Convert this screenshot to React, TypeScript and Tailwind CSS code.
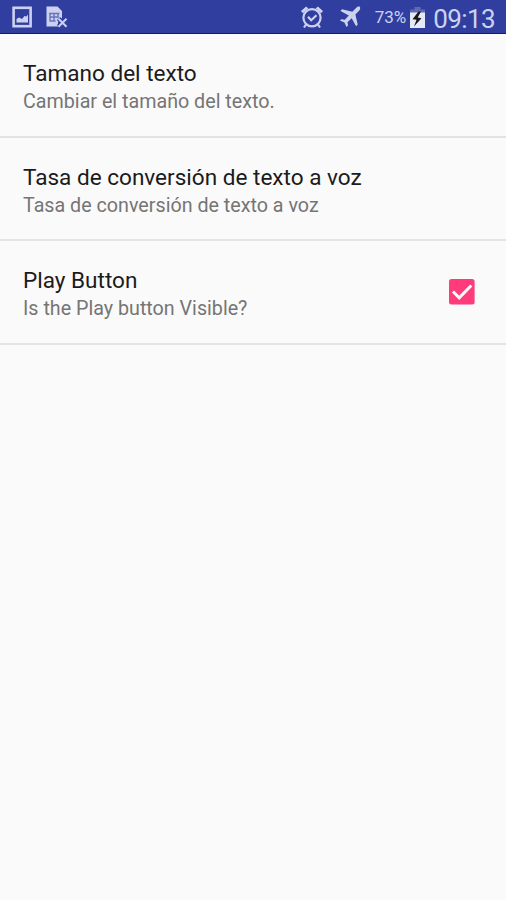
import type { ReactNode } from "react";

const PREFERENCES = [
	{
		title: "Tamano del texto",
		summary: "Cambiar el tamaño del texto.",
	},
	{
		title: "Tasa de conversión de texto a voz",
		summary: "Tasa de conversión de texto a voz",
	},
	{
		title: "Play Button",
		summary: "Is the Play button Visible?",
		checked: true,
	},
];

function PictureIcon() {
	return (
		<svg width="20" height="22" viewBox="0 0 20 22" fill="none">
			<rect x="1.6" y="1.8" width="17" height="18.4" stroke="#ccd1f0" strokeWidth="2.6" />
			<path d="M4.500 16.500V13l2.500-1.500 3 1.500 2.500-3 2 .5 1.500-2v8Z" fill="#ccd1f0" />
		</svg>
	);
}

function SimIcon() {
	return (
		<svg width="22" height="22" viewBox="0 0 22 22" fill="none">
			<path d="M.5.5h11L16 5v7l-4 4v4.500H.5Z" fill="#ccd1f0" />
			<path
				d="M3 7.500h10.500M3.500 11h8M3.500 15h6M4 7.500V15M8 7.500V15M12 7.500V12"
				stroke="#6874bd"
				strokeWidth="1.4"
			/>
			<path d="m12.500 12.500 8 8M20.500 12.500l-8 8" stroke="#303f9f" strokeWidth="4.500" />
			<path d="m12.500 12.800 8 8M20.500 12.800l-8 8" stroke="#ccd1f0" strokeWidth="2" />
		</svg>
	);
}

function AlarmIcon() {
	return (
		<svg width="24" height="24" viewBox="0 0 24 24" fill="none" stroke="#ccd1f0">
			<circle cx="12" cy="12.800" r="8.600" strokeWidth="2.200" />
			<path d="m8 11.800 3.200 3.500 5.300-5" strokeWidth="2.200" />
			<path d="M2 7.200 7.200 2.500M22 7.200l-5.200-4.700" strokeWidth="3" />
			<path d="m6 19.500-2 3M18 19.500l2 3" strokeWidth="2.200" />
		</svg>
	);
}

function PlaneIcon() {
	return (
		<svg width="22" height="22" viewBox="0 0 22 22" fill="#ccd1f0">
			<path d="M20.800.800c-.900-.700-2.500 0-3.500 1l-4 4L3 3.300 1.500 4.900l8.300 4.600-4 4.200-3.400-.500L.900 14.500l4.500 2.100 2.200 4.300 1.400-1.400-.500-3.300 4.200-4 4.400 8 1.600-1.600-2.300-10.200 3.900-4c.900-1 1.200-2.900.500-3.600Z" />
		</svg>
	);
}

function BatteryIcon() {
	return (
		<svg width="15" height="22" viewBox="0 0 15 22">
			<path d="M4.500 1h6v2.500H15V7H0V3.500h4.500Z" fill="#606ab0" />
			<path d="M0 6.500h15V22H0Z" fill="#e6e9f8" />
			<path d="m8.500 5.500-6 7.700 4 .5L4 20.500l7.500-8.300-3.800-.8L11 5.500Z" fill="#17171c" />
		</svg>
	);
}

function StatusBar() {
	return (
		<header className="flex h-[34px] items-center justify-between border-b border-[#1013a0] bg-[#303f9f] pl-3 pr-[11px] pt-px text-[#ccd1f0]">
			<div className="flex items-center gap-[14px]">
				<PictureIcon />
				<SimIcon />
			</div>
			<div className="flex items-center">
				<AlarmIcon />
				<span className="ml-[15px]">
					<PlaneIcon />
				</span>
				<span className="ml-[14px] pt-px text-[17px] leading-none">73%</span>
				<span className="ml-1">
					<BatteryIcon />
				</span>
				<span className="ml-2 pt-[3px] text-[26px] leading-none tracking-[-0.6px]">09:13</span>
			</div>
		</header>
	);
}

function Checkbox() {
	return (
		<svg width="26" height="26" viewBox="0 0 26 26" fill="none" role="img" aria-label="checked">
			<rect width="25.600" height="25.600" rx="2.500" fill="#ff3b7c" />
			<path d="m4 12.500 6.200 6.300L22.300 6.500" stroke="#fafafa" strokeWidth="3" />
		</svg>
	);
}

interface PreferenceProps {
	title: string;
	summary: string;
	children?: ReactNode;
}

function Preference({ title, summary, children }: PreferenceProps) {
	return (
		<li className="flex h-[103.600px] items-center justify-between border-b-2 border-[#e3e3e3] pl-[23px] pr-[31px]">
			<div className="pt-[5.500px]">
				<h2 className="text-[22.560px] leading-[29px] text-[#1b1b1b]">{title}</h2>
				<p className="text-[19.700px] leading-[28px] text-[#757575]">{summary}</p>
			</div>
			{children}
		</li>
	);
}

export default function App() {
	return (
		<div className="min-h-screen bg-[#fafafa] font-[Roboto,sans-serif]">
			<StatusBar />
			<ul>
				{PREFERENCES.map(({ title, summary, checked }) => (
					<Preference key={title} title={title} summary={summary}>
						{checked && <Checkbox />}
					</Preference>
				))}
			</ul>
		</div>
	);
}
